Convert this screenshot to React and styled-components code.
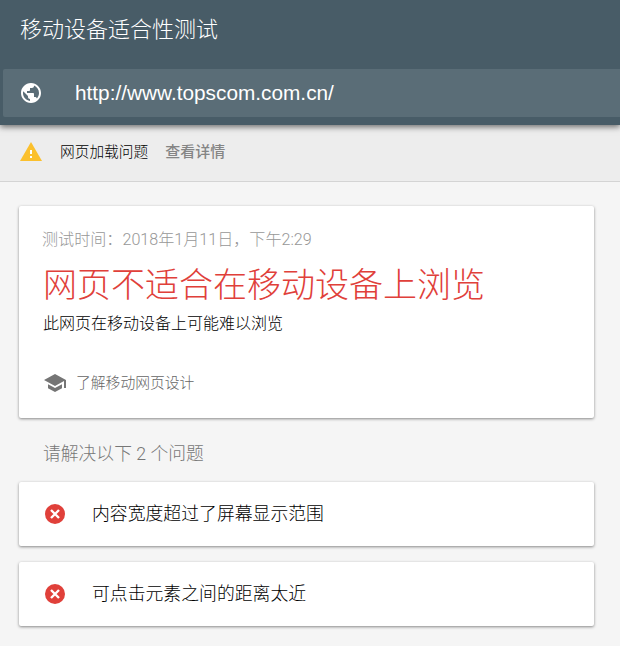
import React from "react";
import styled, { createGlobalStyle } from "styled-components";

const GlobalStyle = createGlobalStyle`
  html, body {
    margin: 0;
    padding: 0;
    background: #f5f5f5;
    overflow: hidden;
  }
  body {
    font-family: "Roboto", "Noto Sans CJK SC", sans-serif;
    font-weight: 300;
  }
`;

const Page = styled.div`
  width: 620px;
  height: 646px;
  overflow: hidden;
  background: #f5f5f5;
`;

// Top bar
const Header = styled.header`
  height: 125px;
  box-sizing: border-box;
  padding-top: 69px;
  padding-left: 3px;
  background: #485c67;
  position: relative;
  box-shadow: 0 2px 6px rgba(0, 0, 0, 0.55);
`;

const Title = styled.h1`
  position: absolute;
  left: 20px;
  top: 15px;
  margin: 0;
  color: #fff;
  font-size: 22px;
  line-height: 30px;
  font-weight: 300;
`;

const UrlBar = styled.div`
  height: 48px;
  display: flex;
  align-items: center;
  padding-left: 16px;
  gap: 32px;
  background: #5a6d77;
  border-radius: 2px 0 0 2px;
`;

const UrlText = styled.span`
  color: #fff;
  font-family: "Liberation Sans", Arial, sans-serif;
  font-weight: 400;
  font-size: 20.8px;
`;

// Warning strip
const WarningBar = styled.div`
  height: 57px;
  box-sizing: border-box;
  display: flex;
  align-items: center;
  padding: 0 0 2px 19px;
  background: #ededed;
  border-bottom: 1px solid #d4d4d4;
  font-size: 14.7px;
`;

const WarningText = styled.span`
  margin: -3px 0 0 17px;
  color: #000;
`;

const DetailsLink = styled.span`
  margin: -3px 0 0 17px;
  color: #858585;
  font-size: 15px;
  font-weight: 500;
`;

const Content = styled.main`
  padding: 24px 26px 0 19px;
`;

const Card = styled.section`
  background: #fff;
  border-radius: 2px;
  box-shadow: 0 1px 3px rgba(0, 0, 0, 0.45);
`;

const SummaryCard = styled(Card)`
  height: 212px;
  box-sizing: border-box;
  padding: 24px 24px 0;
`;

const TestTime = styled.div`
  margin-left: -1px;
  color: #979797;
  font-size: 16.1px;
  line-height: 20px;
`;

const Verdict = styled.div`
  margin-top: 13px;
  color: #e0403a;
  font-size: 34px;
  line-height: 44px;
`;

const SubText = styled.div`
  margin-top: 5px;
  color: #000;
  font-size: 16px;
  line-height: 24px;
`;

const LearnRow = styled.div`
  margin-top: 35px;
  display: flex;
  align-items: center;
  gap: 9px;
  color: #666;
  font-size: 14.8px;
  line-height: 24px;
`;

const SectionLabel = styled.div`
  margin: 24px 0 16px 24px;
  color: #777;
  font-size: 17.8px;
  line-height: 24px;
`;

const IssueCard = styled(Card)`
  height: 64px;
  display: flex;
  align-items: center;
  padding-left: 24px;
  gap: 25px;
  margin-bottom: 16px;
  color: #000;
  font-size: 17.85px;
  line-height: 24px;
`;

const GlobeIcon = () => (
  <svg width="24" height="24" viewBox="0 0 24 24" fill="#fff">
    <path d="M12 2C6.48 2 2 6.48 2 12s4.48 10 10 10 10-4.48 10-10S17.52 2 12 2zm-1 17.93c-3.95-.49-7-3.85-7-7.93 0-.62.08-1.21.21-1.79L9 15v1c0 1.1.9 2 2 2v1.93zm6.9-2.54c-.26-.81-1-1.39-1.9-1.39h-1v-3c0-.55-.45-1-1-1H8v-2h2c.55 0 1-.45 1-1V7h2c1.1 0 2-.9 2-2v-.41c2.93 1.19 5 4.06 5 7.41 0 2.08-.8 3.97-2.1 5.39z" />
  </svg>
);

const WarningIcon = () => (
  <svg width="24" height="24" viewBox="0 0 24 24">
    <path fill="#fbc02d" d="M1 21h22L12 2 1 21z" />
    <path fill="#fff" d="M13 18h-2v-2h2v2zm0-4h-2v-4h2v4z" />
  </svg>
);

const SchoolIcon = () => (
  <svg width="24" height="24" viewBox="0 0 24 24" fill="#757575">
    <path d="M5 13.18v4L12 21l7-3.82v-4L12 17l-7-3.82zM12 3L1 9l11 6 9-4.91V17h2V9L12 3z" />
  </svg>
);

const ErrorIcon = () => (
  <svg width="24" height="24" viewBox="0 0 24 24">
    <circle cx="12" cy="12" r="10" fill="#e0403a" />
    <path stroke="#fff" strokeWidth="2.4" d="M8 8l8 8M16 8l-8 8" />
  </svg>
);

export default function App() {
  return (
    <Page>
      <GlobalStyle />
      <Header>
        <Title>移动设备适合性测试</Title>
        <UrlBar>
          <GlobeIcon />
          <UrlText>http://www.topscom.com.cn/</UrlText>
        </UrlBar>
      </Header>

      <WarningBar>
        <WarningIcon />
        <WarningText>网页加载问题</WarningText>
        <DetailsLink>查看详情</DetailsLink>
      </WarningBar>

      <Content>
        <SummaryCard>
          <TestTime>测试时间：2018年1月11日，下午2:29</TestTime>
          <Verdict>网页不适合在移动设备上浏览</Verdict>
          <SubText>此网页在移动设备上可能难以浏览</SubText>
          <LearnRow>
            <SchoolIcon />
            <span>了解移动网页设计</span>
          </LearnRow>
        </SummaryCard>

        <SectionLabel>请解决以下 2 个问题</SectionLabel>

        <IssueCard>
          <ErrorIcon />
          <span>内容宽度超过了屏幕显示范围</span>
        </IssueCard>
        <IssueCard>
          <ErrorIcon />
          <span>可点击元素之间的距离太近</span>
        </IssueCard>
      </Content>
    </Page>
  );
}
